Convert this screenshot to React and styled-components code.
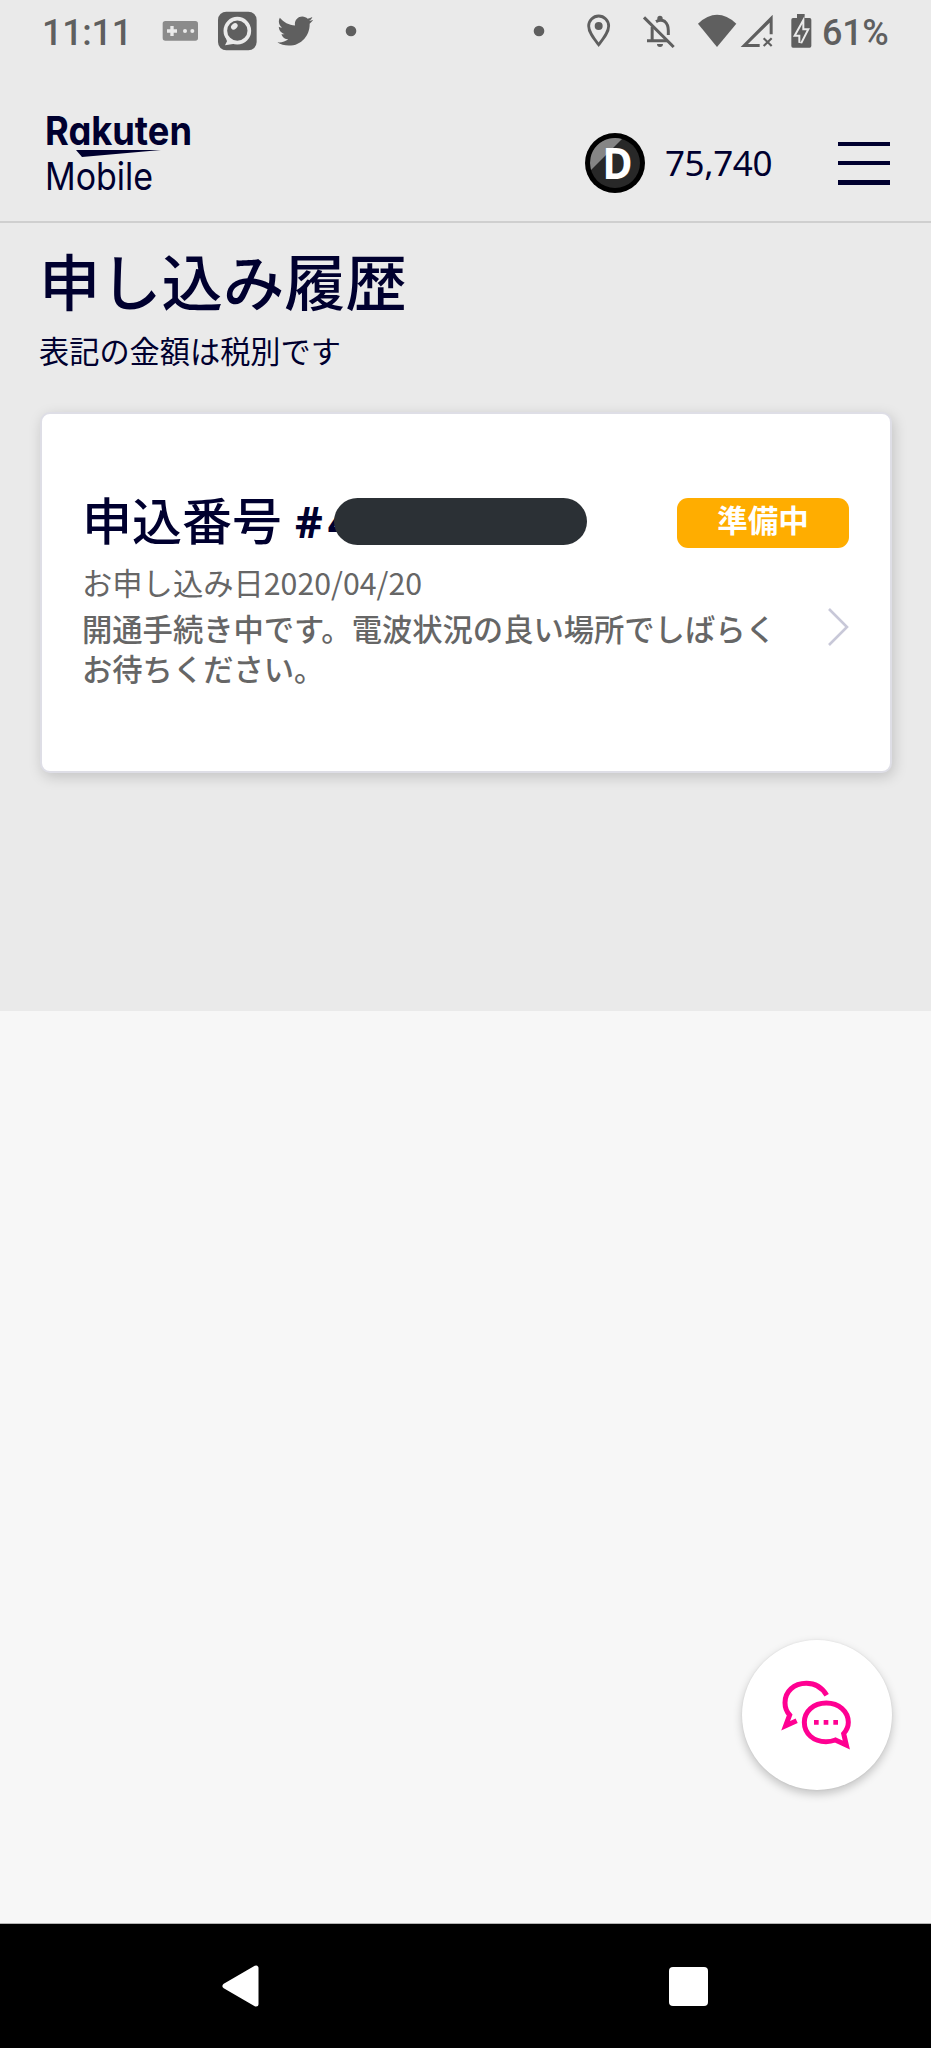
import styled, { createGlobalStyle } from "styled-components";
import { FaTwitter } from "react-icons/fa";

const INK = "#00002f";
const STATUS = "#5f5f5f";
const PAGE = "#eaeaea";

const GlobalStyle = createGlobalStyle`
	* {
		box-sizing: border-box;
		margin: 0;
		padding: 0;
	}
	body {
		background-color: #f7f7f7;
		font-family: "Noto Sans CJK JP", sans-serif;
	}
`;

const Screen = styled.div`
	position: relative;
	display: flex;
	flex-direction: column;
	width: 931px;
	height: 2048px;
	overflow: hidden;
`;

const Page = styled.div`
	height: 1011px;
	background-color: ${PAGE};
`;

// ******* Status bar *******

const StatusBar = styled.div`
	display: flex;
	justify-content: space-between;
	height: 62px;
	padding: 0 34px 0 41px;
`;

const StatusGroup = styled.div`
	display: flex;
	align-items: center;
`;

const StatusText = styled.span`
	width: ${(props) => props.$width};
	padding: 3px 0 0 ${(props) => props.$indent};
	color: ${STATUS};
	font-family: Roboto, sans-serif;
	font-size: 36px;
	font-weight: 500;
	line-height: 62px;
	letter-spacing: -0.3px;
	white-space: nowrap;
`;

const GlyphSvg = styled.svg`
	flex: none;
	display: block;
	fill: ${STATUS};
	color: ${STATUS};
`;

// every status glyph is drawn on a grid three times finer than the bar
function Glyph({ x, w, children }) {
	return (
		<GlyphSvg width={w / 3} height={62} viewBox={`${x} 0 ${w} 186`}>
			{children}
		</GlyphSvg>
	);
}

// ******* Header *******

const Header = styled.header`
	display: flex;
	align-items: flex-start;
	justify-content: space-between;
	height: 161px;
	padding: 44px 41px 0 46px;
	border-bottom: 2px solid #cfcfcf;
`;

const LogoSvg = styled.svg`
	display: block;
	margin-top: 5px;
	overflow: visible;
	fill: ${INK};
	font-family: Inter, "Liberation Sans", sans-serif;
	font-feature-settings: "cv11";
`;

const HeaderRight = styled.div`
	display: flex;
	align-items: center;
	height: 114px;
`;

const CoinSvg = styled.svg`
	display: block;
	font-family: "Noto Sans", sans-serif;
	font-weight: 700;
`;

const Points = styled.span`
	width: 193px;
	padding-left: 20px;
	color: ${INK};
	font-family: "Noto Sans", sans-serif;
	font-size: 35px;
	line-height: 48px;
	letter-spacing: -0.4px;
`;

const MenuButton = styled.button`
	display: flex;
	flex-direction: column;
	justify-content: space-between;
	width: 52px;
	height: 43px;
	border: none;
	background: none;
`;

const MenuLine = styled.span`
	height: 4.5px;
	background-color: ${INK};
`;

// ******* Content *******

const Content = styled.main`
	padding: 19px 39px 0;
`;

const Title = styled.h1`
	color: ${INK};
	font-size: 61.3px;
	font-weight: 500;
	line-height: 76px;
`;

const Note = styled.p`
	color: ${INK};
	font-size: 30.2px;
	line-height: 40px;
	margin-top: 12px;
`;

const Card = styled.section`
	display: flex;
	flex-direction: column;
	width: 852px;
	height: 361px;
	margin: 42px 0 0 1px;
	padding: 84px 41px 0 40px;
	border: 2px solid #dedee6;
	border-radius: 10px;
	background-color: #ffffff;
	box-shadow: 2px 4px 14px rgba(0, 0, 0, 0.17);
`;

const CardHead = styled.div`
	display: flex;
	align-items: flex-start;
	justify-content: space-between;
`;

const CardTitle = styled.h2`
	display: flex;
	align-items: center;
	height: 50px;
	color: ${INK};
	font-size: 50px;
	font-weight: 500;
	line-height: 50px;
	white-space: nowrap;
	margin-top: -5px;
`;

const OrderNumber = styled.span`
	margin-left: 13px;
	padding-top: 7px;
	font-family: "Noto Sans", sans-serif;
	font-size: 43px;
	font-weight: 700;
	letter-spacing: 5px;
`;

const Redaction = styled.span`
	width: 253px;
	height: 47px;
	margin: 7px 0 0 -23px;
	border-radius: 24px;
	background-color: #2b3035;
`;

const Badge = styled.span`
	width: 172px;
	height: 50px;
	border-radius: 11px;
	background-color: #ffad00;
	color: #ffffff;
	font-size: 30.5px;
	font-weight: 700;
	line-height: 43px;
	text-align: center;
`;

const CardBody = styled.div`
	display: flex;
	align-items: flex-start;
	justify-content: space-between;
	margin-top: 14px;
	color: #666666;
	font-size: 30.3px;
`;

const DateLine = styled.p`
	line-height: 40px;
`;

const Message = styled.p`
	width: 720px;
	font-weight: 500;
	line-height: 40px;
	margin-top: 6px;
`;

const Chevron = styled.svg`
	display: block;
	margin-top: 46px;
	fill: none;
	stroke: #c8c8d8;
	stroke-width: 2.6;
`;

// ******* Chat button and navigation *******

const ChatButton = styled.button`
	position: absolute;
	left: 742px;
	top: 1640px;
	display: flex;
	align-items: center;
	justify-content: center;
	width: 150px;
	height: 150px;
	border: none;
	border-radius: 50%;
	background-color: #ffffff;
	box-shadow: 0 4px 10px rgba(0, 0, 0, 0.22), 0 0 2px rgba(0, 0, 0, 0.08);
`;

const NavBar = styled.nav`
	display: flex;
	align-items: flex-start;
	justify-content: space-between;
	height: 125px;
	margin-top: auto;
	padding: 41px 223px 0 222px;
	border-top: 1px solid #b5b5b5;
	background-color: #000000;
`;

const RecentSquare = styled.span`
	width: 39px;
	height: 39px;
	margin-top: 2px;
	border-radius: 4px;
	background-color: #ffffff;
`;

function LeftStatus() {
	return (
		<StatusGroup>
			<StatusText $width="119px" $indent="1px">
				11:11
			</StatusText>
			<Glyph x={480} w={150}>
				<rect x="488" y="63" width="106" height="59" rx="8" fill="#8b8b8b" />
				<path d="M511 78h10v10h10v10h-10v10h-10v-10h-10v-10h10z" fill={PAGE} />
				<circle cx="555" cy="93" r="6" fill={PAGE} />
				<circle cx="577" cy="93" r="6" fill={PAGE} />
			</Glyph>
			<Glyph x={630} w={170}>
				<rect x="654" y="35" width="116" height="116" rx="25" />
				<path d="M676 108L681 124L675 136L704 131z" fill={PAGE} />
				<circle cx="712" cy="92" r="36" stroke={PAGE} strokeWidth="11" />
				<ellipse cx="703" cy="79" rx="11" ry="8" fill={PAGE} transform="rotate(-40 703 79)" />
			</Glyph>
			<Glyph x={800} w={160}>
				<FaTwitter x={831} y={39} size={108} />
			</Glyph>
			<Glyph x={960} w={150}>
				<circle cx="1053" cy="93" r="16" />
			</Glyph>
		</StatusGroup>
	);
}

function RightStatus() {
	return (
		<StatusGroup>
			<Glyph x={100} w={140}>
				<circle cx="118" cy="93" r="16" />
			</Glyph>
			<Glyph x={240} w={170}>
				<path
					d="M296 134C281 115 266 97 266 78A30 30 0 0 1 326 78C326 97 311 115 296 134z"
					fill="none"
					stroke={STATUS}
					strokeWidth="8.5"
				/>
				<circle cx="296" cy="78" r="12" />
			</Glyph>
			<Glyph x={410} w={170}>
				<g fill="none" stroke={STATUS} strokeWidth="9">
					<path d="M434 52L523 141" />
					<path d="M458.5 80V122M443 122H504" />
					<path d="M470 65Q484 57 496 64Q507 73 507 92V105" />
				</g>
				<path d="M474 61V55a8 8 0 0 1 16 0V61zM473 132H491a9 9 0 0 1-18 0z" />
			</Glyph>
			<Glyph x={580} w={137}>
				<path d="M595 71Q652 18 710 71L652 141z" />
			</Glyph>
			<Glyph x={717} w={133}>
				<path d="M818 44V103H809V68L744 132H779V141H722z" />
				<path d="M791 115L815 138M815 115L791 138" stroke={STATUS} strokeWidth="6.5" />
			</Glyph>
			<Glyph x={850} w={105}>
				<path d="M892 42H915V54H930Q935 54 935 59V138Q935 143 930 143H880Q875 143 875 138V59Q875 54 880 54H892z" />
				<path
					d="M908 72L890 104H902V128L921 91H908z"
					stroke={PAGE}
					strokeWidth="12"
					paintOrder="stroke"
				/>
			</Glyph>
			<StatusText $width="79px" $indent="4px">
				61%
			</StatusText>
		</StatusGroup>
	);
}

function Logo() {
	return (
		<LogoSvg width="150" height="84" viewBox="46 111 150 84">
			<text x="45" y="145" fontSize="40" fontWeight="700" textLength="147" lengthAdjust="spacingAndGlyphs">
				Rakuten
			</text>
			<path d="M76 150H161L82 157z" />
			<text x="45" y="190" fontSize="38.5" fontWeight="400" textLength="108" lengthAdjust="spacingAndGlyphs">
				Mobile
			</text>
		</LogoSvg>
	);
}

function Coin() {
	return (
		<CoinSvg width="60" height="60" viewBox="0 0 60 60">
			<circle cx="30" cy="30" r="30" fill="#000000" />
			<circle cx="30" cy="30" r="25" fill="#282828" />
			<path d="M6 37A25 25 0 0 1 37 6z" fill="#858585" />
			<text x="17.5" y="46" fontSize="43" fill="#ffffff" textLength="30" lengthAdjust="spacingAndGlyphs">
				D
			</text>
		</CoinSvg>
	);
}

function ChatIcon() {
	return (
		<svg width="150" height="150" viewBox="66 60 450 450">
			<g fill="none" stroke="#ff0092" strokeWidth="15">
				<path d="M320 226C306 202 284 190 259 190C221 190 195 215 195 248C195 263 200 275 209 285L197 317L230 302" />
				<path d="M319 249C280 249 253 274 253 307C253 341 280 365 318 365C328 365 338 363 346 360L379 375L371 341C380 331 385 320 385 307C385 274 357 249 319 249z" />
			</g>
			<path d="M282 300h14v14h-14zM311 300h14v14h-14zM340 300h14v14h-14z" fill="#ff0092" />
		</svg>
	);
}

export default function App() {
	return (
		<>
			<GlobalStyle />
			<Screen>
				<Page>
					<StatusBar>
						<LeftStatus />
						<RightStatus />
					</StatusBar>
					<Header>
						<Logo />
						<HeaderRight>
							<Coin />
							<Points>75,740</Points>
							<MenuButton aria-label="menu">
								<MenuLine />
								<MenuLine />
								<MenuLine />
							</MenuButton>
						</HeaderRight>
					</Header>
					<Content>
						<Title>申し込み履歴</Title>
						<Note>表記の金額は税別です</Note>
						<Card>
							<CardHead>
								<CardTitle>
									申込番号
									<OrderNumber>#4</OrderNumber>
									<Redaction />
								</CardTitle>
								<Badge>準備中</Badge>
							</CardHead>
							<CardBody>
								<div>
									<DateLine>お申し込み日2020/04/20</DateLine>
									<Message>開通手続き中です。電波状況の良い場所でしばらくお待ちください。</Message>
								</div>
								<Chevron width="21" height="38" viewBox="0 0 21 38">
									<path d="M1 1L19 19L1 37" />
								</Chevron>
							</CardBody>
						</Card>
					</Content>
				</Page>
				<ChatButton aria-label="chat">
					<ChatIcon />
				</ChatButton>
				<NavBar>
					<svg width="37" height="42" viewBox="0 0 37 42">
						<path
							d="M3 21L34 3V39z"
							fill="#ffffff"
							stroke="#ffffff"
							strokeWidth="5"
							strokeLinejoin="round"
						/>
					</svg>
					<RecentSquare />
				</NavBar>
			</Screen>
		</>
	);
}
